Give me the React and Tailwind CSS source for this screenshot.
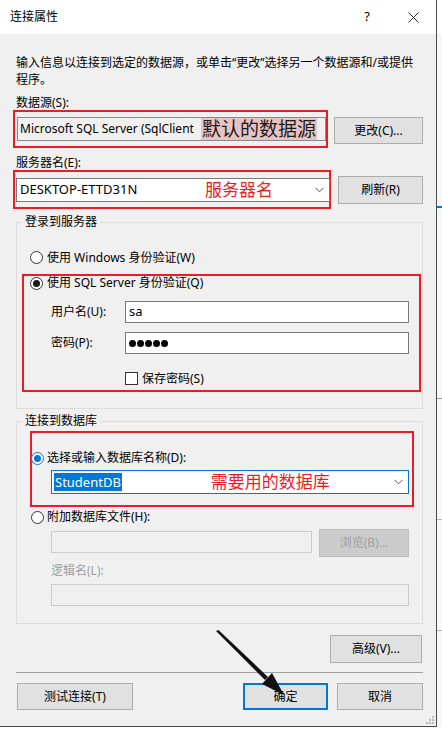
import React from 'react'

const btn = 'flex items-center justify-center bg-[#e1e1e1] border border-[#adadad] text-[12px] text-black'

function Radio({ checked, blue }) {
    const ring = blue ? 'border-[#0078d7]' : 'border-[#333333]'
    const dot = blue ? 'bg-[#0078d7]' : 'bg-[#1a1a1a]'
    return (
        <span className={`w-[13px] h-[13px] rounded-full border ${ring} bg-white flex items-center justify-center shrink-0`}>
            {checked && <span className={`w-[7px] h-[7px] rounded-full ${dot}`} />}
        </span>
    )
}

function Chevron() {
    return (
        <svg width="9" height="6" viewBox="0 0 9 6" className="shrink-0">
            <path d="M0.5 0.8 L4.5 4.8 L8.5 0.8" fill="none" stroke="#555" strokeWidth="1" />
        </svg>
    )
}

export default function App() {
    return (
        <div className="w-[442px] h-[731px] bg-white relative overflow-hidden font-['Noto_Sans','Noto_Sans_CJK_SC',sans-serif] text-[12px] text-black">
            <div className="flex h-[727px]">
                {/* dialog */}
                <div className="w-[437px] h-[727px] flex flex-col border-r border-b border-[#4a4a4a]">
                    {/* title bar */}
                    <div className="h-[34px] bg-white flex items-center pl-[10px] shrink-0">
                        <span>连接属性</span>
                        <span className="ml-auto w-[46px] text-center text-[13px]">?</span>
                        <span className="w-[46px] flex justify-center">
                            <svg width="11" height="11" viewBox="0 0 11 11">
                                <path d="M0.5 0.5 L10.5 10.5 M10.5 0.5 L0.5 10.5" stroke="#222" strokeWidth="1" />
                            </svg>
                        </span>
                    </div>

                    {/* body */}
                    <div className="flex-1 bg-[#f0f0f0] flex flex-col pl-[16px] pr-[13px] pt-[20px] relative">
                        <p className="leading-[17px] whitespace-nowrap">
                            输入信息以连接到选定的数据源，或单击“更改”选择另一个数据源和/或提供<br />程序。
                        </p>

                        <div className="mt-[7px] h-[16px] leading-[16px]">数据源(S):</div>
                        <div className="mt-[-1px] flex h-[38px]">
                            <div className="ml-[-3px] w-[315px] h-[38px] border-2 border-[#ec1c24] pl-[2px] pt-[5px]">
                                <div className="w-[309px] h-[24px] border border-[#8a8a8a] bg-[#f0f0f0] flex items-center pl-[2px] overflow-hidden">
                                    <span className="w-[180px] whitespace-nowrap text-[12px]">Microsoft SQL Server (SqlClient</span>
                                    <span className="ml-[1px] h-[22px] leading-[22px] px-[1px] bg-[#e7c3c3] text-[19px] text-[#1a1a1a] whitespace-nowrap">默认的数据源</span>
                                </div>
                            </div>
                            <div className={`${btn} ml-[6px] mt-[7px] w-[90px] h-[27px]`}>更改(C)...</div>
                        </div>

                        <div className="mt-[7px] h-[16px] leading-[16px]">服务器名(E):</div>
                        <div className="mt-[-1px] flex h-[39px]">
                            <div className="ml-[-3px] w-[318px] h-[39px] border-2 border-[#ec1c24] pl-[1px] pt-[6px]">
                                <div className="w-[314px] h-[24px] border border-[#7a7a7a] bg-white flex items-center pl-[3px] pr-[5px]">
                                    <span className="w-[185px] whitespace-nowrap text-[13px]">DESKTOP-ETTD31N</span>
                                    <span className="text-[17px] text-[#ec1c24] whitespace-nowrap">服务器名</span>
                                    <span className="ml-auto"><Chevron /></span>
                                </div>
                            </div>
                            <div className={`${btn} ml-[7px] mt-[6px] w-[85px] h-[28px]`}>刷新(R)</div>
                        </div>

                        {/* login group */}
                        <fieldset className="mt-[5px] border border-[#dcdcdc] h-[195px] pb-[15px]">
                            <legend className="ml-[5px] px-[3px] h-[16px] leading-[16px]">登录到服务器</legend>
                            <div className="mt-[19px] h-[17px] flex items-center gap-[4px] pl-[13px]">
                                <Radio />
                                <span className="whitespace-nowrap">使用 Windows 身份验证(W)</span>
                            </div>
                            <div className="mt-[8px] ml-[5px] w-[399px] h-[118px] border-2 border-[#ec1c24]">
                                <div className="mt-[-1px] h-[16px] flex items-center gap-[4px] pl-[6px]">
                                    <Radio checked />
                                    <span className="whitespace-nowrap">使用 SQL Server 身份验证(Q)</span>
                                </div>
                                <div className="mt-[10px] flex items-center h-[22px] pl-[27px]">
                                    <span className="w-[74px]">用户名(U):</span>
                                    <div className="w-[284px] h-[22px] border border-[#7a7a7a] bg-white flex items-center pl-[3px] text-[13px]">sa</div>
                                </div>
                                <div className="mt-[9px] flex items-center h-[22px] pl-[27px]">
                                    <span className="w-[74px]">密码(P):</span>
                                    <div className="w-[284px] h-[22px] border border-[#7a7a7a] bg-white flex items-center pl-[3px] gap-[1px]">
                                        {[0, 1, 2, 3, 4].map(i => (
                                            <span key={i} className="w-[7px] h-[7px] rounded-full bg-black" />
                                        ))}
                                    </div>
                                </div>
                                <div className="mt-[18px] flex items-center h-[13px] pl-[101px] gap-[4px]">
                                    <span className="w-[13px] h-[13px] border border-[#333333] bg-white" />
                                    <span className="whitespace-nowrap">保存密码(S)</span>
                                </div>
                            </div>
                        </fieldset>

                        {/* database group */}
                        <fieldset className="mt-[4px] border border-[#dcdcdc] h-[211px]">
                            <legend className="ml-[5px] px-[3px] h-[16px] leading-[16px]">连接到数据库</legend>
                            <div className="mt-[2px] ml-[13px] w-[384px] h-[76px] border-2 border-[#ec1c24]">
                                <div className="mt-[17px] h-[16px] flex items-center gap-[3px] ml-[-1px]">
                                    <Radio checked blue />
                                    <span className="whitespace-nowrap">选择或输入数据库名称(D):</span>
                                </div>
                                <div className="mt-[4px] ml-[19px] w-[358px] h-[24px] border border-[#0078d7] bg-white flex items-center pl-[2px] pr-[5px]">
                                    <span className="bg-[#0078d7] text-white h-[18px] leading-[18px] px-[1px] text-[13px]">StudentDB</span>
                                    <span className="ml-[89px] text-[17px] text-[#ec1c24] whitespace-nowrap">需要用的数据库</span>
                                    <span className="ml-auto"><Chevron /></span>
                                </div>
                            </div>
                            <div className="mt-[2px] h-[16px] flex items-center gap-[3px] pl-[14px]">
                                <Radio />
                                <span className="whitespace-nowrap">附加数据库文件(H):</span>
                            </div>
                            <div className="mt-[4px] flex pl-[34px] h-[28px]">
                                <div className="mt-[2px] w-[261px] h-[22px] border border-[#cccccc] bg-[#f0f0f0]" />
                                <div className="ml-[7px] w-[90px] h-[28px] flex items-center justify-center bg-[#cccccc] border border-[#bfbfbf] text-[#a0a0a0]">浏览(B)...</div>
                            </div>
                            <div className="mt-[6px] h-[16px] leading-[16px] pl-[34px] text-[#a0a0a0]">逻辑名(L):</div>
                            <div className="mt-[5px] ml-[34px] w-[358px] h-[22px] border border-[#cccccc] bg-[#f0f0f0]" />
                        </fieldset>

                        <div className={`${btn} mt-[11px] ml-auto mr-[1px] w-[92px] h-[28px]`}>高级(V)...</div>
                        <div className="mt-[9px] border-t border-[#a0a0a0]" />

                        <div className="mt-[10px] flex h-[27px]">
                            <div className={`${btn} ml-[1px] w-[116px] h-[27px]`}>测试连接(T)</div>
                            <div className="ml-auto w-[85px] h-[27px] flex items-center justify-center bg-[#e1e1e1] border-2 border-[#0078d7]">确定</div>
                            <div className={`${btn} ml-[9px] w-[86px] h-[27px]`}>取消</div>
                        </div>

                        {/* size grip */}
                        <svg width="8" height="8" viewBox="0 0 8 8" className="absolute right-[2px] bottom-[2px]">
                            {[[6, 0], [6, 3], [3, 3], [6, 6], [3, 6], [0, 6]].map(([x, y], i) => (
                                <rect key={i} x={x} y={y} width="2" height="2" fill="#b8b8b8" />
                            ))}
                        </svg>
                    </div>
                </div>

                {/* window behind */}
                <div className="flex-1 bg-[#f7f7f7] flex flex-col">
                    <div className="h-[34px] bg-white" />
                    <div className="mt-[172px] h-[2px] bg-[#0078d7]" />
                    <div className="mt-[190px] h-[1px] bg-[#999]" />
                    <div className="mt-[120px] h-[1px] bg-[#bbb]" />
                    <div className="mt-[110px] h-[1px] bg-[#bbb]" />
                </div>
            </div>

            {/* annotation arrow */}
            <svg width="442" height="731" className="absolute left-0 top-0 pointer-events-none">
                <path d="M216 631 L218.5 630 L268 677 L265 680 Z" fill="#111" />
                <polygon points="284,695 262,684 272,673" fill="#111" />
            </svg>
        </div>
    )
}
